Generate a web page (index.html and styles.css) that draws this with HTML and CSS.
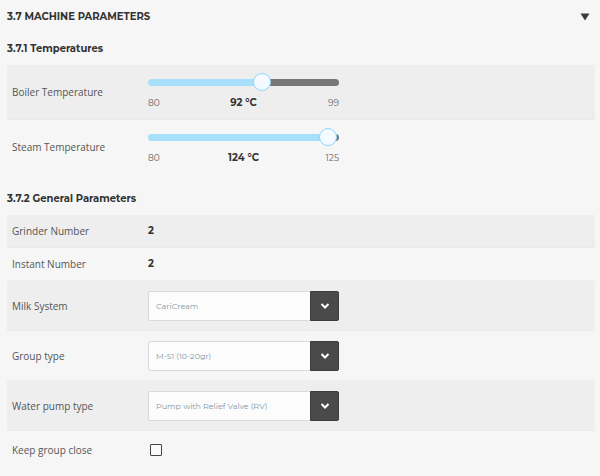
FILE: index.html
```html
<!DOCTYPE html>
<html lang="en">
<head>
<meta charset="utf-8">
<meta name="viewport" content="width=device-width, initial-scale=1">
<title>Machine Parameters</title>
<link rel="stylesheet" href="styles.css">
</head>
<body>
<main class="panel">
  <header class="panel-header">
    <h1 class="panel-title">3.7 MACHINE PARAMETERS</h1>
    <button class="collapse" type="button" aria-label="Collapse section">
      <svg class="collapse-icon" viewBox="0 0 10 8" aria-hidden="true"><path d="M0.5 0.5h9L5 7.5z"/></svg>
    </button>
  </header>

  <section>
    <h2 class="section-title">3.7.1 Temperatures</h2>
    <div class="row row-slider shaded">
      <label class="name" for="boiler">Boiler Temperature</label>
      <div class="field">
        <input class="slider" id="boiler" type="range" min="80" max="99" step="any" value="91.5" style="--fill: 60%">
        <div class="scale"><span>80</span><output class="value" for="boiler">92 °C</output><span>99</span></div>
      </div>
    </div>
    <div class="row row-slider">
      <label class="name" for="steam">Steam Temperature</label>
      <div class="field">
        <input class="slider" id="steam" type="range" min="80" max="125" step="any" value="124.4" style="--fill: 98%">
        <div class="scale"><span>80</span><output class="value" for="steam">124 °C</output><span>125</span></div>
      </div>
    </div>
  </section>

  <section>
    <h2 class="section-title">3.7.2 General Parameters</h2>
    <div class="row row-text shaded">
      <span class="name">Grinder Number</span>
      <span class="value">2</span>
    </div>
    <div class="row row-text">
      <span class="name">Instant Number</span>
      <span class="value">2</span>
    </div>
    <div class="row row-select shaded">
      <label class="name" for="milk">Milk System</label>
      <div class="field dropdown">
        <select class="select" id="milk"><option>CariCream</option></select>
        <span class="arrow"><svg class="arrow-icon" viewBox="0 0 10 6" aria-hidden="true"><path d="M1.5 1L5 4.500 8.500 1"/></svg></span>
      </div>
    </div>
    <div class="row row-select">
      <label class="name" for="group">Group type</label>
      <div class="field dropdown">
        <select class="select" id="group"><option>M-51 (10-20gr)</option></select>
        <span class="arrow"><svg class="arrow-icon" viewBox="0 0 10 6" aria-hidden="true"><path d="M1.5 1L5 4.500 8.500 1"/></svg></span>
      </div>
    </div>
    <div class="row row-select shaded">
      <label class="name" for="pump">Water pump type</label>
      <div class="field dropdown">
        <select class="select" id="pump"><option>Pump with Relief Valve (RV)</option></select>
        <span class="arrow"><svg class="arrow-icon" viewBox="0 0 10 6" aria-hidden="true"><path d="M1.5 1L5 4.500 8.500 1"/></svg></span>
      </div>
    </div>
    <div class="row row-check">
      <label class="name" for="keep">Keep group close</label>
      <input class="check" id="keep" type="checkbox">
    </div>
  </section>
</main>
</body>
</html>
```
FILE: styles.css
```css
* {
  box-sizing: border-box;
}

body {
  margin: 0;
  background: #f6f6f6;
  color: #333;
  font-family: Montserrat, Inter, "Open Sans", sans-serif;
  font-size: 10px;
  line-height: 16px;
}

.panel {
  padding: 9px 5px 8px 7px;
}

.panel-header {
  display: flex;
  align-items: center;
  justify-content: space-between;
  padding-right: 5px;
}

.panel-title,
.section-title {
  margin: 0;
  font-size: 10px;
  line-height: 16px;
  font-weight: 700;
}

.section-title {
  padding: 16px 0 8px;
}

.collapse {
  display: flex;
  padding: 0;
  border: 0;
  background: none;
}

.collapse-icon {
  width: 10px;
  height: 8px;
  fill: #3a3a3a;
}

.row {
  display: grid;
  grid-template-columns: 136px minmax(0, 191px);
  align-items: center;
  padding: 0 5px;
  border-bottom: 1px solid #f0f0f0;
}

.shaded {
  background: #eee;
  border-color: #eaeaea;
}

.row-slider {
  min-height: 55px;
}

.row-slider:last-child,
.row-check {
  border-bottom-color: transparent;
}

.row-text {
  min-height: 33px;
}

.row-select {
  min-height: 50px;
}

.row-check {
  min-height: 38px;
}

.name {
  color: #555;
  font-family: "Open Sans", sans-serif;
}

.value {
  color: #333;
  font-size: 10px;
  font-weight: 700;
}

.slider {
  display: block;
  width: 100%;
  height: 18px;
  margin: 0;
  appearance: none;
  background: none;
}

.slider::-webkit-slider-runnable-track {
  height: 7px;
  border-radius: 4px;
  background: linear-gradient(to right, #a8e0fb var(--fill), #777 var(--fill));
}

.slider::-webkit-slider-thumb {
  width: 18px;
  height: 18px;
  margin-top: -6px;
  appearance: none;
  border: 1px solid #8fd8fa;
  border-radius: 50%;
  background: #f4faff;
}

.scale {
  display: grid;
  grid-template-columns: 1fr auto 1fr;
  padding-top: 4px;
  color: #666;
  font-size: 9px;
}

.scale span:last-child {
  text-align: right;
}

.dropdown {
  position: relative;
}

.select {
  display: block;
  width: 100%;
  height: 30px;
  padding: 0 36px 0 7px;
  appearance: none;
  border: 1px solid #d9d9d9;
  border-radius: 2px;
  background: #fcfcfc;
  color: #7f96a4;
  font-family: inherit;
  font-size: 8px;
}

.arrow {
  position: absolute;
  top: 0;
  right: 0;
  bottom: 0;
  display: flex;
  align-items: center;
  justify-content: center;
  width: 29px;
  border: 1px solid #3c3c3c;
  border-radius: 0 2px 2px 0;
  background: #4a4a4a;
  pointer-events: none;
}

.arrow-icon {
  width: 10px;
  height: 6px;
  fill: none;
  stroke: #fff;
  stroke-width: 2;
}

.check {
  width: 12px;
  height: 12px;
  margin: 0 2px;
  appearance: none;
  border: 1px solid #444;
  border-radius: 1px;
  background: #fafafa;
}
```
